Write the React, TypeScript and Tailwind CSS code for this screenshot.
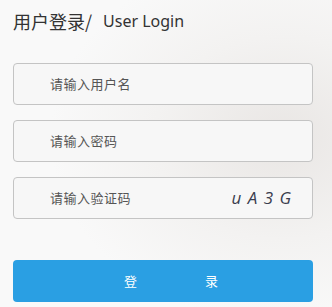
export default function App() {
  const fields = [
    { ph: "请输入用户名" },
    { ph: "请输入密码" },
    { ph: "请输入验证码", captcha: "u A 3 G" },
  ];

  return (
    <div className="w-[332px] h-[307px] overflow-hidden bg-[radial-gradient(ellipse_70%_60%_at_85%_45%,#e9e6e4_0%,#f3f2f1_55%,#f9f9f9_100%)] px-[13px] pt-[9px] font-['Noto_Sans','Noto_Sans_CJK_SC',sans-serif] text-[#333]">
      <h1 className="h-6 flex items-end leading-6 mb-[30px] text-[#333]">
        <span className="text-[18px] font-['Noto_Sans_CJK_SC',sans-serif]">用户登录/</span>
        <span className="ml-[11px] text-[16px] leading-6">User Login</span>
      </h1>

      <div className="w-[300px] flex flex-col gap-[15px]">
        {fields.map((f) => (
          <div
            key={f.ph}
            className="h-[42px] flex items-center rounded-[4px] border border-[#c4c4c4] bg-[#f7f7f7] pl-[36px] pr-[20px]"
          >
            <span className="flex-1 text-[13px] text-[#555] tracking-[0.5px] font-['Noto_Sans_CJK_SC',sans-serif]">
              {f.ph}
            </span>
            {f.captcha && (
              <span className="italic text-[17px] text-[#3a3d4e] whitespace-pre tracking-[1px] font-['Open_Sans',sans-serif]">
                {f.captcha}
              </span>
            )}
          </div>
        ))}
      </div>

      <button
        type="button"
        className="mt-[41px] w-[300px] h-[42px] rounded-[4px] bg-[#2a9fe3] flex items-center justify-center gap-[68px] pl-4 text-[13px] text-white font-['Noto_Sans_CJK_SC',sans-serif]"
      >
        <span>登</span>
        <span>录</span>
      </button>
    </div>
  );
}
